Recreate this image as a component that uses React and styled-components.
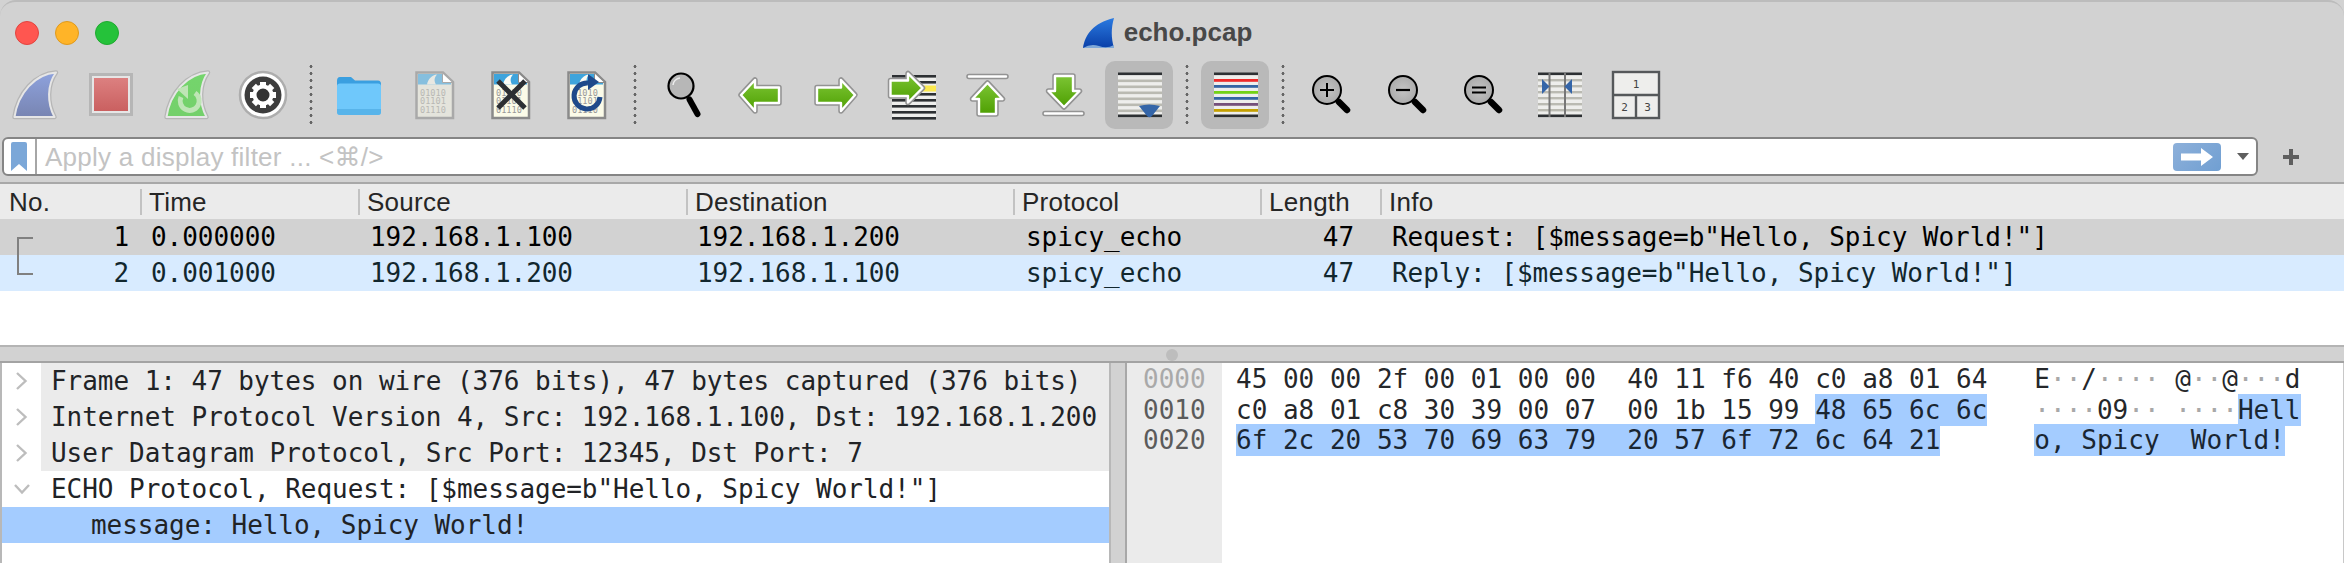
import React from 'react';
import styled, { createGlobalStyle, css } from 'styled-components';

const GlobalStyle = createGlobalStyle`
  html, body {
    margin: 0;
    padding: 0;
    background: #fff;
    overflow: hidden;
  }
`;

const mono = '"DejaVu Sans Mono", "Liberation Mono", monospace';
const sans = '"Liberation Sans", "DejaVu Sans", sans-serif';

const Window = styled.div`
  width: 2344px;
  height: 563px;
  display: flex;
  flex-direction: column;
  background: #d2d2d2;
  overflow: hidden;
  font-family: ${sans};
`;

const TitleBar = styled.div`
  height: 61px;
  box-sizing: border-box;
  display: grid;
  grid-template-columns: 1fr auto 1fr;
  align-items: center;
  padding: 2px 0 0 15px;
  border-top: 2px solid #bcbcbc;
  border-radius: 16px 16px 0 0;
`;

const Lights = styled.div`
  display: flex;
  gap: 16px;
`;

const Light = styled.span`
  width: 24px;
  height: 24px;
  box-sizing: border-box;
  border-radius: 50%;
  background: ${({ $fill }) => $fill};
  border: 1px solid ${({ $edge }) => $edge};
`;

const Title = styled.div`
  display: flex;
  align-items: center;
  gap: 9px;
  padding-right: 24px;
  font-size: 26px;
  font-weight: 700;
  color: #484848;
`;

const Toolbar = styled.div`
  display: flex;
  gap: 8px;
  padding: 0 0 8px 1px;
  height: 68px;
`;

const Tool = styled.div`
  width: 68px;
  height: 68px;
  border-radius: 10px;
  background: ${({ $active }) => ($active ? '#b9b9b9' : 'transparent')};
  svg {
    display: block;
  }
`;

const ToolSep = styled.div`
  width: 12px;
  height: 62px;
  margin-top: 2px;
  background-image: radial-gradient(circle, #666 1.4px, transparent 1.6px);
  background-size: 12px 7px;
  background-repeat: repeat-y;
`;

const FilterRow = styled.div`
  height: 47px;
  display: flex;
  padding: 0 0 6px 2px;
  box-sizing: border-box;
  border-bottom: 2px solid #a8a8a8;
`;

const FilterBox = styled.div`
  width: 2256px;
  height: 39px;
  box-sizing: border-box;
  display: flex;
  align-items: center;
  background: #fff;
  border: 2px solid #858585;
  border-radius: 6px;
`;

const Bookmark = styled.div`
  width: 33px;
  height: 100%;
  box-sizing: border-box;
  padding: 3px 0 0 7px;
  border-right: 2px solid #a6a6a6;
`;

const FilterText = styled.div`
  flex: 1;
  padding: 2px 0 0 8px;
  font-size: 26px;
  letter-spacing: 0.25px;
  color: #c3c3c3;
  font-family: ${sans};
`;

const GoButton = styled.div`
  width: 48px;
  height: 28px;
  display: flex;
  align-items: center;
  justify-content: center;
  background: linear-gradient(135deg, #8db0da, #709fd2);
  border-radius: 4px;
`;

const Caret = styled.div`
  width: 0;
  height: 0;
  margin: 0 7px 0 16px;
  border-left: 6px solid transparent;
  border-right: 6px solid transparent;
  border-top: 7px solid #5f5f5f;
`;

const PlusSlot = styled.div`
  margin: 12px 0 0 25px;
`;

const columns = '140px 218px 328px 327px 247px 120px 1fr';

const PacketList = styled.div`
  height: 161px;
  background: #fff;
  flex: none;
`;

const HeaderRow = styled.div`
  height: 35px;
  display: grid;
  grid-template-columns: ${columns};
  align-items: center;
  background: #ebebeb;
  color: #262626;
  font-size: 26px;
  letter-spacing: 0.25px;
`;

const HeaderCell = styled.div`
  height: 26px;
  line-height: 26px;
  padding-left: 7px;
  border-left: 2px solid ${({ $first }) => ($first ? 'transparent' : '#c2c2c2')};
`;

const PacketRow = styled.div`
  position: relative;
  height: 36px;
  display: grid;
  grid-template-columns: ${columns};
  font-family: ${mono};
  font-size: 26px;
  letter-spacing: -0.04px;
  line-height: 36px;
  white-space: pre;
  ${({ $kind }) =>
    $kind === 'selected'
      ? css`
          background: #d2d2d2;
          color: #000;
        `
      : css`
          background: #d8ebff;
          color: #12272e;
        `}
`;

const PacketCell = styled.div`
  padding-left: ${({ $pad }) => $pad ?? 11}px;
  padding-right: ${({ $end }) => $end ?? 0}px;
  text-align: ${({ $right }) => ($right ? 'right' : 'left')};
`;

const Bracket = styled.svg`
  position: absolute;
  left: 16px;
  top: 18px;
  z-index: 2;
`;

const HSplit = styled.div`
  position: relative;
  height: 18px;
  box-sizing: border-box;
  flex: none;
  background: #d2d2d2;
  border-top: 2px solid #b4b4b4;
  border-bottom: 2px solid #a3a3a3;
`;

const Handle = styled.span`
  position: absolute;
  left: 1166px;
  top: 2px;
  width: 12px;
  height: 12px;
  border-radius: 50%;
  background: #bdbdbd;
`;

const Panes = styled.div`
  flex: 1;
  display: flex;
  min-height: 0;
  font-family: ${mono};
  font-size: 26px;
  letter-spacing: -0.04px;
`;

const TreePane = styled.div`
  width: 1107px;
  border-left: 2px solid #b8b8b8;
  background: #fff;
  color: #212326;
`;

const TreeRow = styled.div`
  height: 36px;
  line-height: 36px;
  display: flex;
  white-space: pre;
  background: ${({ $selected }) => ($selected ? '#a4ccff' : 'transparent')};
`;

const Expander = styled.div`
  width: 39px;
  flex: none;
  display: flex;
  align-items: center;
  justify-content: center;
  background: ${({ $selected }) => ($selected ? '#a4ccff' : '#fff')};
`;

const TreeText = styled.div`
  flex: 1;
  padding-left: ${({ $depth }) => ($depth ? 50 : 10)}px;
  background: ${({ $shade, $selected }) => ($selected ? '#a4ccff' : $shade ? '#ebebeb' : 'transparent')};
`;

const VSplit = styled.div`
  width: 18px;
  box-sizing: border-box;
  background: #d2d2d2;
  border-left: 2px solid #b8b8b8;
  border-right: 2px solid #a8a8a8;
`;

const HexPane = styled.div`
  flex: 1;
  display: flex;
  background: #fff;
  line-height: 30.5px;
  letter-spacing: 0;
  color: #25272a;
  border-right: 1px solid #c8c8c8;
`;

const Gutter = styled.div`
  width: 95px;
  box-sizing: border-box;
  padding: 1px 0 0 16px;
  background: #ebebeb;
`;

const Offset = styled.div`
  color: ${({ $dim }) => ($dim ? '#a9a9a9' : '#5b5b5b')};
`;

const HexBody = styled.div`
  flex: 1;
  padding: 1px 0 0 14px;
`;

const HexLine = styled.div`
  white-space: pre;
  height: 30.5px;
`;

const Mark = styled.span`
  background: #a4ccff;
  color: #1a2632;
  padding: 1px 0;
`;

const Dot = styled.span`
  color: #a8a8a8;
`;

function Defs() {
  return (
    <defs>
      <linearGradient id="green" x1="0" y1="0" x2="0" y2="1">
        <stop offset="0" stopColor="#7cc534" />
        <stop offset="1" stopColor="#4e9f02" />
      </linearGradient>
    </defs>
  );
}

function Svg({ children, w = 68, h = 68 }) {
  return (
    <svg width={w} height={h} viewBox={`0 0 ${w} ${h}`} xmlns="http://www.w3.org/2000/svg">
      {children}
    </svg>
  );
}

const finPath = 'M13.5 56 C17 32 34 13 55 11.5 C46 24 46 42 53.5 56 Z';

function Fin({ id, from, to, children }) {
  return (
    <Svg>
      <defs>
        <linearGradient id={id} x1="0" y1="0" x2="0" y2="1">
          <stop offset="0" stopColor={from} />
          <stop offset="1" stopColor={to} />
        </linearGradient>
      </defs>
      <path d={finPath} fill="none" stroke="#b6b6b6" strokeWidth="4.5" strokeLinejoin="round" />
      <path d={finPath} fill={`url(#${id})`} stroke="#e6e6e6" strokeWidth="2" strokeLinejoin="round" />
      {children}
    </Svg>
  );
}

function StartIcon() {
  return <Fin id="finBlue" from="#8ea2dd" to="#7885b2" />;
}

function StopIcon() {
  return (
    <Svg>
      <defs>
        <linearGradient id="stopRed" x1="0" y1="0" x2="0" y2="1">
          <stop offset="0" stopColor="#dc8080" />
          <stop offset="1" stopColor="#ca6060" />
        </linearGradient>
      </defs>
      <rect x="13.5" y="13.5" width="41" height="40" fill="#e6e6e6" stroke="#b6b6b6" strokeWidth="3" />
      <rect x="17" y="17" width="34" height="33" fill="url(#stopRed)" />
    </Svg>
  );
}

function RestartIcon() {
  return (
    <Fin id="finGreen" from="#74d56c" to="#74d06b">
      <path d="M28 36 A9.5 9.5 0 1 0 42 32" fill="none" stroke="#bfe5b6" strokeWidth="5" />
      <path d="M24 28 L35 24 L35 38 Z" fill="#bfe5b6" />
    </Fin>
  );
}

function GearIcon() {
  const teeth = [0, 45, 90, 135, 180, 225, 270, 315];
  return (
    <Svg>
      <circle cx="34" cy="34" r="23" fill="#fff" stroke="#adadad" strokeWidth="2.5" />
      <circle cx="34" cy="34" r="18.5" fill="#3d3d3d" />
      {teeth.map((a) => (
        <rect key={a} x="31" y="21" width="6" height="6" fill="#fff" transform={`rotate(${a} 34 34)`} />
      ))}
      <circle cx="34" cy="34" r="8.5" fill="#333" stroke="#fff" strokeWidth="4" />
    </Svg>
  );
}

function FolderIcon() {
  return (
    <Svg>
      <path d="M12 20 Q12 16 15 16 H26 L30 19.5 H53 Q56 19.5 56 23 V30 H12 Z" fill="#3a9fe0" />
      <path d="M12 25 Q12 22.5 15 22.5 H53 Q56 22.5 56 25 V51 Q56 54 53 54 H15 Q12 54 12 51 Z" fill="#6fc8fb" />
      <path d="M12 48 H56 V51 Q56 54 53 54 H15 Q12 54 12 51 Z" fill="#58b4ea" />
    </Svg>
  );
}

function DocBase({ edge, band, body, fin, digits }) {
  return (
    <>
      <path d="M15.5 11.5 H42 L52 21 V57 H15.5 Z" fill={body} stroke={edge} strokeWidth="2.5" />
      <path d="M17 13 H41 L50 22 V23.5 H17 Z" fill={band} />
      <path d="M26 23.5 C27 18 31 14 36 13.5 C33 17 33 20 35 23.5 Z" fill={fin} />
      <path d="M41.5 12.5 V21.5 H51" fill="#fff" stroke={edge} strokeWidth="1" />
      <text x="19" y="34.5" fontFamily={mono} fontSize="8.6" fill={digits}>01010</text>
      <text x="19" y="43" fontFamily={mono} fontSize="8.6" fill={digits}>01101</text>
      <text x="19" y="52" fontFamily={mono} fontSize="8.6" fill={digits}>01110</text>
    </>
  );
}

function OpenIcon() {
  return (
    <Svg>
      <DocBase edge="#a9a9a9" band="#86bfde" body="#e4e4dc" fin="#e8e8e2" digits="#b8b8b4" />
    </Svg>
  );
}

function CloseIcon() {
  return (
    <Svg>
      <DocBase edge="#8a8a8a" band="#3ea4dc" body="#fbfbe8" fin="#fbfbf4" digits="#999" />
      <path d="M21 20 L48 47 M48 20 L21 47" stroke="#2c2f33" strokeWidth="5" fill="none" />
    </Svg>
  );
}

function ReloadIcon() {
  return (
    <Svg>
      <DocBase edge="#8a8a8a" band="#3ea4dc" body="#fbfbe8" fin="#fbfbf4" digits="#999" />
      <path d="M35 22 A13 13 0 1 0 47 36" stroke="#1f4a8a" strokeWidth="5" fill="none" />
      <path d="M35 13 L46 21 L35 29 Z" fill="#1f4a8a" />
    </Svg>
  );
}

function FindIcon() {
  return (
    <Svg>
      <circle cx="32" cy="25" r="12.5" fill="#b7b7b7" stroke="#000" strokeWidth="2.2" />
      <path d="M24 24 A8 8 0 0 1 31 17" fill="none" stroke="#eee" strokeWidth="1.5" />
      <path d="M40.5 38.5 L48.5 53" stroke="#000" strokeWidth="6" strokeLinecap="round" />
    </Svg>
  );
}

function GreenArrow({ d }) {
  return (
    <>
      <path d={d} fill="none" stroke="#939393" strokeWidth="5.5" strokeLinejoin="round" />
      <path d={d} fill="url(#green)" stroke="#fff" strokeWidth="2.4" strokeLinejoin="round" />
    </>
  );
}

function LeftIcon() {
  return (
    <Svg>
      <Defs />
      <GreenArrow d="M16 34 L30 19 V26.5 H54 V42 H30 V50 Z" />
    </Svg>
  );
}

function RightIcon() {
  return (
    <Svg>
      <Defs />
      <GreenArrow d="M54 34 L40 19 V26.5 H16 V42 H40 V50 Z" />
    </Svg>
  );
}

function JumpIcon() {
  const lines = [15, 21, 33, 39, 45, 51, 57];
  return (
    <Svg>
      <Defs />
      <rect x="15" y="14" width="44" height="44" fill="#eeeeec" />
      {lines.map((y) => (
        <rect key={y} x="15" y={y - 1} width="44" height="2.6" fill="#2d3033" />
      ))}
      <rect x="15" y="24.5" width="44" height="6" fill="#fce94f" />
      <GreenArrow d="M45.5 27 L31 12.5 V19.5 H13.5 V35 H31 V41.5 Z" />
    </Svg>
  );
}

function FirstIcon() {
  return (
    <Svg>
      <Defs />
      <rect x="14" y="13.5" width="41" height="4" rx="2" fill="#fff" stroke="#939393" strokeWidth="1.6" />
      <GreenArrow d="M34.5 22 L49.5 38 H43 V53 H26 V38 H19.5 Z" />
    </Svg>
  );
}

function LastIcon() {
  return (
    <Svg>
      <Defs />
      <rect x="14" y="50.5" width="41" height="4" rx="2" fill="#fff" stroke="#939393" strokeWidth="1.6" />
      <GreenArrow d="M35 46 L50.5 30 H44 V15 H26 V30 H19.5 Z" />
    </Svg>
  );
}

function StripesBase({ children }) {
  return (
    <>
      <rect x="13" y="12" width="44" height="44" fill="#eeeeec" />
      <rect x="13" y="11.5" width="44" height="2.6" fill="#2d3033" />
      <rect x="13" y="53.5" width="44" height="2.6" fill="#2d3033" />
      {children}
    </>
  );
}

function AutoScrollIcon() {
  const lines = [18.5, 24.5, 30.5, 36.5, 42.5, 48.5];
  return (
    <Svg>
      <StripesBase>
        {lines.map((y) => (
          <rect key={y} x="13" y={y} width="44" height="2.6" fill="#babab2" />
        ))}
      </StripesBase>
      <path d="M34 45 Q44 42 55 45 L47 55 Q44.5 57.5 42 55 Z" fill="#3465a8" />
    </Svg>
  );
}

function ColorizeIcon() {
  const lines = [
    [18, '#ee2a2a'],
    [24, '#3465a4'],
    [30, '#73d216'],
    [36, '#3465a4'],
    [42, '#75507b'],
    [48, '#c4a000'],
  ];
  return (
    <Svg>
      <StripesBase>
        {lines.map(([y, c]) => (
          <rect key={y} x="13" y={y} width="44" height="2.8" fill={c} />
        ))}
      </StripesBase>
    </Svg>
  );
}

function ZoomIcon({ id, children }) {
  return (
    <Svg>
      <defs>
        <radialGradient id={id} cx="0.5" cy="0.5" r="0.6">
          <stop offset="0" stopColor="#c4c4c4" />
          <stop offset="1" stopColor="#a6a6a6" />
        </radialGradient>
      </defs>
      <circle cx="30" cy="29" r="14" fill={`url(#${id})`} stroke="#000" strokeWidth="2" />
      <path d="M42 41 L50 49" stroke="#000" strokeWidth="6.5" strokeLinecap="round" />
      {children}
    </Svg>
  );
}

function ZoomInIcon() {
  return (
    <ZoomIcon id="zoomIn">
      <path d="M23 29 H37 M30 22 V36" stroke="#000" strokeWidth="2" />
    </ZoomIcon>
  );
}

function ZoomOutIcon() {
  return (
    <ZoomIcon id="zoomOut">
      <path d="M23 29 H37" stroke="#000" strokeWidth="2.2" />
    </ZoomIcon>
  );
}

function ZoomFitIcon() {
  return (
    <ZoomIcon id="zoomFit">
      <path d="M23 26.5 H37 M23 31.5 H37" stroke="#000" strokeWidth="2.2" />
    </ZoomIcon>
  );
}

function ResizeIcon() {
  const lines = [18, 24, 30, 36, 42, 48];
  return (
    <Svg>
      <StripesBase>
        {lines.map((y) => (
          <rect key={y} x="13" y={y} width="44" height="2.4" fill="#babab2" />
        ))}
      </StripesBase>
      <rect x="23.5" y="12" width="2" height="44" fill="#777" />
      <rect x="39" y="12" width="2" height="44" fill="#777" />
      <path d="M17 18 L24.5 25.5 L17 33 Z" fill="#3465a8" />
      <path d="M47 18 L39.5 25.5 L47 33 Z" fill="#3465a8" />
    </Svg>
  );
}

function LayoutIcon() {
  return (
    <Svg>
      <rect x="12" y="11" width="46" height="46" fill="#eeeeec" stroke="#55585a" strokeWidth="2.4" />
      <path d="M12 34 H58 M35 34 V57" stroke="#55585a" strokeWidth="2.4" />
      <text x="35" y="27" textAnchor="middle" fontFamily={mono} fontSize="11" fill="#444">1</text>
      <text x="23.5" y="50" textAnchor="middle" fontFamily={mono} fontSize="11" fill="#444">2</text>
      <text x="46.5" y="50" textAnchor="middle" fontFamily={mono} fontSize="11" fill="#444">3</text>
    </Svg>
  );
}

function TitleFin() {
  return (
    <svg width="32" height="30" viewBox="0 0 32 30">
      <defs>
        <linearGradient id="titleFin" x1="0" y1="0" x2="0" y2="1">
          <stop offset="0" stopColor="#2a7ae0" />
          <stop offset="1" stopColor="#0a3fa8" />
        </linearGradient>
      </defs>
      <path d="M0 30 C2 17 10 5 31 0 C28 10 28 20 31 30 Z" fill="url(#titleFin)" />
      <path d="M0 30 Q8 25 16 28 T31 27 V30 Z" fill="#7fa8d8" />
    </svg>
  );
}

const toolGroups = [
  [StartIcon, StopIcon, RestartIcon, GearIcon],
  [FolderIcon, OpenIcon, CloseIcon, ReloadIcon],
  [FindIcon, LeftIcon, RightIcon, JumpIcon, FirstIcon, LastIcon, { icon: AutoScrollIcon, active: true }],
  [{ icon: ColorizeIcon, active: true }],
  [ZoomInIcon, ZoomOutIcon, ZoomFitIcon, ResizeIcon, LayoutIcon],
];

const headers = ['No.', 'Time', 'Source', 'Destination', 'Protocol', 'Length', 'Info'];

const packets = [
  {
    no: '1',
    time: '0.000000',
    src: '192.168.1.100',
    dst: '192.168.1.200',
    proto: 'spicy_echo',
    len: '47',
    info: 'Request: [$message=b"Hello, Spicy World!"]',
    kind: 'selected',
  },
  {
    no: '2',
    time: '0.001000',
    src: '192.168.1.200',
    dst: '192.168.1.100',
    proto: 'spicy_echo',
    len: '47',
    info: 'Reply: [$message=b"Hello, Spicy World!"]',
    kind: 'related',
  },
];

const tree = [
  { text: 'Frame 1: 47 bytes on wire (376 bits), 47 bytes captured (376 bits)', shade: true, arrow: 'right' },
  { text: 'Internet Protocol Version 4, Src: 192.168.1.100, Dst: 192.168.1.200', shade: true, arrow: 'right' },
  { text: 'User Datagram Protocol, Src Port: 12345, Dst Port: 7', shade: true, arrow: 'right' },
  { text: 'ECHO Protocol, Request: [$message=b"Hello, Spicy World!"]', arrow: 'down' },
  { text: 'message: Hello, Spicy World!', selected: true, depth: 1 },
];

function Chevron({ dir }) {
  if (dir === 'down') {
    return (
      <svg width="18" height="12" viewBox="0 0 18 12">
        <path d="M2 2 L9 9.5 L16 2" fill="none" stroke="#bdbdbd" strokeWidth="2.4" />
      </svg>
    );
  }
  return (
    <svg width="13" height="20" viewBox="0 0 13 20">
      <path d="M2 2 L10.5 10 L2 18" fill="none" stroke="#bdbdbd" strokeWidth="2.4" />
    </svg>
  );
}

function Ascii({ text }) {
  return text.split(/(·+)/).map((part, i) =>
    part.startsWith('·') ? <Dot key={i}>{part}</Dot> : <span key={i}>{part}</span>
  );
}

export default function App() {
  return (
    <Window>
      <GlobalStyle />
      <TitleBar>
        <Lights>
          <Light $fill="#ff5650" $edge="#e2443f" />
          <Light $fill="#ffb428" $edge="#e09a1c" />
          <Light $fill="#25c23a" $edge="#1faa30" />
        </Lights>
        <Title>
          <TitleFin />
          echo.pcap
        </Title>
        <span />
      </TitleBar>

      <Toolbar>
        {toolGroups.map((group, g) => (
          <React.Fragment key={g}>
            {g > 0 && <ToolSep />}
            {group.map((item, i) => {
              const Icon = item.icon || item;
              return (
                <Tool key={i} $active={item.active}>
                  <Icon />
                </Tool>
              );
            })}
          </React.Fragment>
        ))}
      </Toolbar>

      <FilterRow>
        <FilterBox>
          <Bookmark>
            <svg width="16" height="29" viewBox="0 0 16 29">
              <path d="M0 2 Q0 0 2 0 H14 Q16 0 16 2 V29 L8 22 L0 29 Z" fill="#7ba7d8" />
            </svg>
          </Bookmark>
          <FilterText>{'Apply a display filter ... <⌘/>'}</FilterText>
          <GoButton>
            <svg width="34" height="18" viewBox="0 0 34 18">
              <path d="M1 5.5 H21 V0 L33 9 L21 18 V12.5 H1 Z" fill="#fff" />
            </svg>
          </GoButton>
          <Caret />
        </FilterBox>
        <PlusSlot>
          <svg width="16" height="16" viewBox="0 0 16 16">
            <path d="M8 0 V16 M0 8 H16" stroke="#5f5f5f" strokeWidth="4" />
          </svg>
        </PlusSlot>
      </FilterRow>

      <PacketList>
        <HeaderRow>
          {headers.map((h, i) => (
            <HeaderCell key={h} $first={i === 0}>
              {h}
            </HeaderCell>
          ))}
        </HeaderRow>
        {packets.map((p, i) => (
          <PacketRow key={p.no} $kind={p.kind}>
            {i === 0 && (
              <Bracket width="18" height="38" viewBox="0 0 18 38">
                <path d="M17 1 H2 V37 H17" fill="none" stroke="#808080" strokeWidth="2" />
              </Bracket>
            )}
            <PacketCell $right $pad={0} $end={11}>{p.no}</PacketCell>
            <PacketCell $pad={11}>{p.time}</PacketCell>
            <PacketCell $pad={12}>{p.src}</PacketCell>
            <PacketCell $pad={11}>{p.dst}</PacketCell>
            <PacketCell $pad={13}>{p.proto}</PacketCell>
            <PacketCell $right $pad={0} $end={26}>{p.len}</PacketCell>
            <PacketCell $pad={12}>{p.info}</PacketCell>
          </PacketRow>
        ))}
      </PacketList>

      <HSplit>
        <Handle />
      </HSplit>

      <Panes>
        <TreePane>
          {tree.map((row) => (
            <TreeRow key={row.text} $selected={row.selected}>
              <Expander $selected={row.selected}>{row.arrow && <Chevron dir={row.arrow} />}</Expander>
              <TreeText $shade={row.shade} $selected={row.selected} $depth={row.depth}>
                {row.text}
              </TreeText>
            </TreeRow>
          ))}
        </TreePane>
        <VSplit />
        <HexPane>
          <Gutter>
            <Offset $dim>0000</Offset>
            <Offset>0010</Offset>
            <Offset>0020</Offset>
          </Gutter>
          <HexBody>
            <HexLine>
              {'45 00 00 2f 00 01 00 00  40 11 f6 40 c0 a8 01 64   '}
              <Ascii text="E··/···· @··@···d" />
            </HexLine>
            <HexLine>
              {'c0 a8 01 c8 30 39 00 07  00 1b 15 99 '}
              <Mark>48 65 6c 6c</Mark>
              {'   '}
              <Ascii text="····09·· ····" />
              <Mark>Hell</Mark>
            </HexLine>
            <HexLine>
              <Mark>6f 2c 20 53 70 69 63 79  20 57 6f 72 6c 64 21</Mark>
              {'      '}
              <Mark>o, Spicy  World!</Mark>
            </HexLine>
          </HexBody>
        </HexPane>
      </Panes>
    </Window>
  );
}
